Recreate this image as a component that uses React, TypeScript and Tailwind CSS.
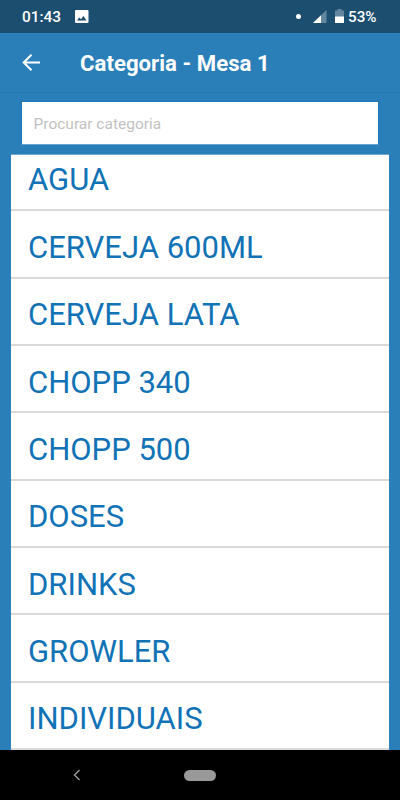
import React from 'react';

const categories = [
  'AGUA',
  'CERVEJA 600ML',
  'CERVEJA LATA',
  'CHOPP 340',
  'CHOPP 500',
  'DOSES',
  'DRINKS',
  'GROWLER',
  'INDIVIDUAIS',
];

function StatusBar() {
  return (
    <div className="flex h-[33px] shrink-0 items-center bg-[#1c4e70] pl-[22px] pr-[22px] text-[15.4px] font-medium text-white">
      <span className="w-[53px] pt-[3px]">01:43</span>
      <svg width="14" height="13" viewBox="0 0 14 13">
        <rect width="13.5" height="13" rx="1" fill="#fff" />
        <path d="M2 10.5 4.3 7.4 6 9.3 8.4 6 11.5 10.5Z" fill="#1c4e70" />
      </svg>
      <div className="ml-auto flex items-center">
        <div className="h-[5px] w-[5px] rounded-full bg-white" />
        <svg className="ml-3" width="14" height="13" viewBox="0 0 14 13">
          <path d="M13.5 0V13H0Z" fill="#64879f" />
          <path d="M8 5.3V13H0Z" fill="#fff" />
        </svg>
        <svg className="ml-2" width="9" height="14" viewBox="0 0 9 14">
          <path d="M2.5 0h4v1.5H9V14H0V1.5h2.5Z" fill="#64879f" />
          <path d="M0 7.5h9V14H0Z" fill="#fff" />
        </svg>
        <span className="w-[34px] pl-1 pt-px text-[15.2px]">53%</span>
      </div>
    </div>
  );
}

function Header() {
  return (
    <header className="flex h-[60px] shrink-0 items-center border-b border-[#2977ab] bg-[#2a7fb9] pl-[22px] text-white">
      <svg width="18" height="18" viewBox="0 0 18 18" fill="none" stroke="#fff" strokeWidth="2">
        <path d="M18 8.5H2M9.5 .8 1.7 8.5l7.8 7.7" />
      </svg>
      <h1 className="ml-10 pt-0.5 text-[22.2px] font-bold">Categoria - Mesa 1</h1>
    </header>
  );
}

export default function App() {
  return (
    <div className="flex h-[800px] w-[400px] flex-col overflow-hidden bg-[#2a7fb9] font-['Roboto',sans-serif]">
      <StatusBar />
      <Header />
      <div className="mx-[21px] mt-2 flex h-11 shrink-0 items-center border border-[#1c76b6] border-b-[#6ba4d0] bg-white px-[11.5px] pt-[3px] text-[15.5px] text-[#c2c2c2]">
        Procurar categoria
      </div>
      <main className="mx-[11px] mt-[9px] min-h-0 flex-1 overflow-hidden border-t border-[#70a6cf] bg-white">
        {categories.map((name, index) => (
          <div
            key={name}
            className={`flex items-center border-b-2 border-[#dadada] pl-[17px] text-[31px] text-[#1173b6] ${
              index === 0 ? 'h-[56.4px] pb-[3px]' : 'h-[67.35px] pt-2'
            }`}
          >
            {name}
          </div>
        ))}
      </main>
      {/* Android navigation */}
      <nav className="grid h-[50px] shrink-0 grid-cols-3 items-center bg-black">
        <svg className="ml-[73px]" width="8" height="12" viewBox="0 0 8 12" fill="none" stroke="#999" strokeWidth="1.5">
          <path d="M6.5 1 1.5 6l5 5" />
        </svg>
        <div className="h-[11px] w-8 justify-self-center rounded-full bg-[#999]" />
      </nav>
    </div>
  );
}
